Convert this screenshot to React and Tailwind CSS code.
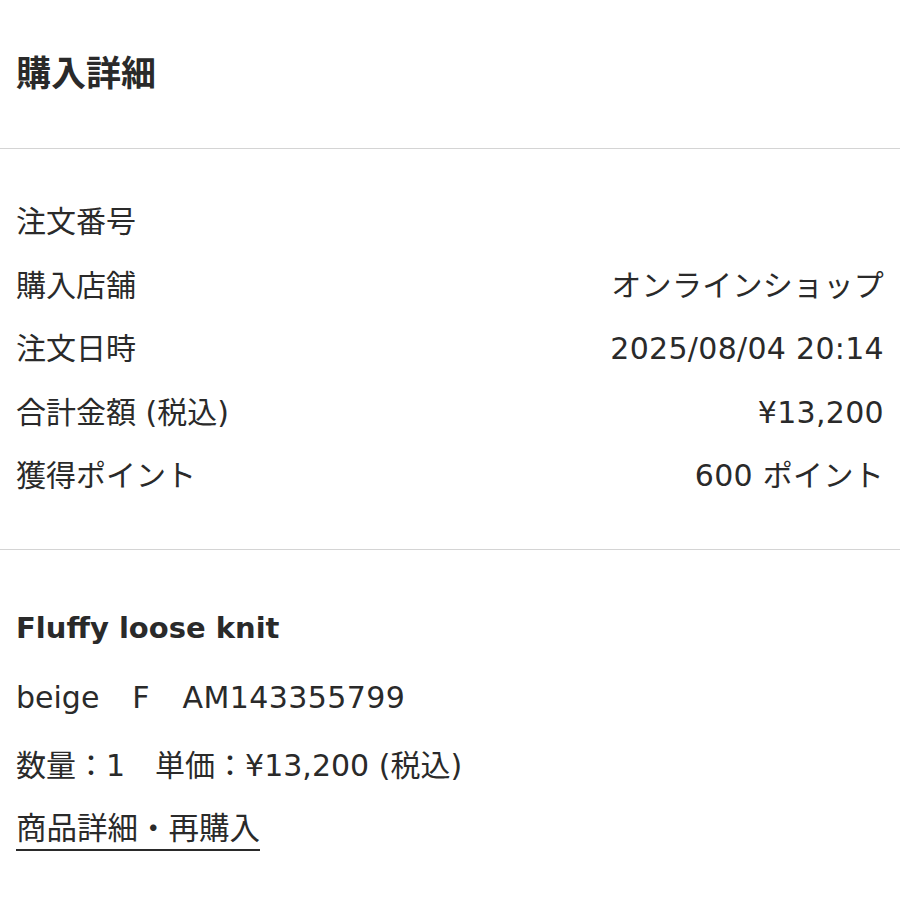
const rows = [
  ['注文番号', ''],
  ['購入店舗', 'オンラインショップ'],
  ['注文日時', '2025/08/04 20:14'],
  ['合計金額 (税込)', '¥13,200'],
  ['獲得ポイント', '600 ポイント'],
];

const App = () => {
  return (
    <div
      className="w-[900px] h-[900px] bg-white text-[#2a2a2a] overflow-hidden"
      style={{ fontFamily: '"DejaVu Sans", "Noto Sans CJK JP", sans-serif' }}
    >
      {/* ヘッダー */}
      <div className="h-[149px] flex items-center px-4 border-b border-[#d4d4d4]">
        <h1 className="text-[35px] font-bold leading-none">購入詳細</h1>
      </div>

      {/* 注文情報 */}
      <div className="px-4 py-[41px] border-b border-[#d4d4d4]">
        {rows.map(([label, value]) => (
          <div key={label} className="h-[63.5px] flex items-center justify-between text-[30px]">
            <span>{label}</span>
            <span className="tracking-[0.3px]">{value}</span>
          </div>
        ))}
      </div>

      {/* 商品 */}
      <div className="px-4 pt-[58px] text-[30px]">
        <p className="text-[29px] font-bold leading-[40px]">Fluffy loose knit</p>
        <p className="flex gap-[33px] leading-[40px] mt-[30px]">
          <span>beige</span>
          <span>F</span>
          <span className="tracking-[0.4px]">AM143355799</span>
        </p>
        <p className="leading-[40px] mt-[28px] whitespace-pre">数量：1　単価：¥13,200 (税込)</p>
        <a className="inline-block mt-[23px] leading-[40px] text-[30.5px] border-b-2 border-[#2a2a2a]" href="#">
          商品詳細・再購入
        </a>
      </div>
    </div>
  );
};

export default App;
